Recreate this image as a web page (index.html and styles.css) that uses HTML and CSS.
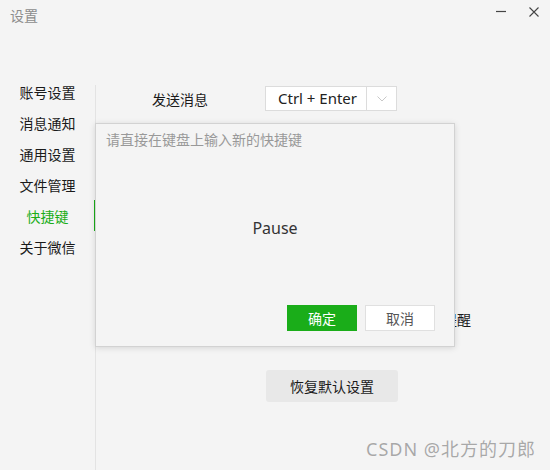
FILE: index.html
```html
<!DOCTYPE html>
<html lang="zh-CN">
<head>
    <meta charset="UTF-8">
    <meta name="viewport" content="width=device-width, initial-scale=1.0">
    <title>设置</title>
    <link rel="stylesheet" href="styles.css">
</head>
<body>
    <div class="window">
        <header class="titlebar">
            <span class="title">设置</span>
            <div class="win-controls">
                <button class="win-btn" aria-label="最小化">
                    <svg width="10" height="10" viewBox="0 0 10 10"><path d="M0 4.5h10" stroke="#444" stroke-width="1.2"/></svg>
                </button>
                <button class="win-btn" aria-label="关闭">
                    <svg width="10" height="10" viewBox="0 0 10 10"><path d="M0.5 0.5l9 9M9.5 0.5l-9 9" stroke="#444" stroke-width="1.1"/></svg>
                </button>
            </div>
        </header>

        <div class="settings">
            <ul class="side-menu">
                <li>账号设置</li>
                <li>消息通知</li>
                <li>通用设置</li>
                <li>文件管理</li>
                <li class="active">快捷键</li>
                <li>关于微信</li>
            </ul>

            <div class="panel">
                <div class="shortcut-row">
                    <span class="shortcut-label">发送消息</span>
                    <div class="select-box">
                        <span class="select-value">Ctrl + Enter</span>
                        <span class="select-arrow">
                            <svg width="10" height="6" viewBox="0 0 10 6"><path d="M0.5 0.5l4.5 4.5 4.5-4.5" fill="none" stroke="#c8c8c8" stroke-width="1"/></svg>
                        </span>
                    </div>
                </div>
                <div class="hidden-row">新消息提醒</div>
                <button class="reset-button">恢复默认设置</button>
            </div>
        </div>

        <div class="key-dialog">
            <div class="key-hint">请直接在键盘上输入新的快捷键</div>
            <div class="key-value">Pause</div>
            <div class="dialog-actions">
                <button class="btn-ok">确定</button>
                <button class="btn-cancel">取消</button>
            </div>
        </div>

        <div class="watermark">CSDN @北方的刀郎</div>
    </div>
</body>
</html>
```

FILE: styles.css
```css
html, body {
    margin: 0;
    padding: 0;
    height: 100%;
    overflow: hidden;
}
body {
    font-family: "Noto Sans", "Noto Sans CJK SC", sans-serif;
    font-size: 14px;
    background-color: #f4f4f4;
    color: #1a1a1a;
}
button {
    font-family: inherit;
}

.window {
    position: relative;
    height: 470px;
}

.titlebar {
    height: 32px;
    display: flex;
    justify-content: space-between;
    align-items: center;
    padding-left: 10px;
}
.title {
    color: #8c8c8c;
    font-size: 14px;
    line-height: 16px;
}
.win-controls {
    display: flex;
    align-items: center;
    margin-top: -8px;
}
.win-btn {
    width: 33px;
    height: 20px;
    padding: 0;
    border: none;
    background: none;
    display: flex;
    align-items: center;
    justify-content: center;
}

/* 左侧菜单 + 右侧内容 */
.settings {
    display: flex;
    align-items: flex-start;
    padding-top: 45px;
}
.side-menu {
    list-style: none;
    margin: 0;
    padding: 0;
    width: 95px;
    flex-shrink: 0;
}
.side-menu li {
    position: relative;
    height: 31px;
    line-height: 31px;
    text-align: center;
    font-size: 14px;
    color: #1a1a1a;
}
.side-menu li.active {
    color: #1aad19;
}
.side-menu li.active::after {
    content: "";
    position: absolute;
    right: -1px;
    top: -1px;
    width: 2px;
    height: 31px;
    background-color: #1aad19;
}

.panel {
    flex-grow: 1;
    margin-top: 8px;
    height: 385px;
    border-left: 1px solid #e3e3e3;
    display: flex;
    flex-direction: column;
    padding-top: 1px;
}

.shortcut-row {
    display: flex;
    align-items: center;
    padding-left: 56px;
}
.shortcut-label {
    width: 113px;
    font-size: 14px;
}
.select-box {
    display: flex;
    height: 23px;
    width: 130px;
    background-color: #fff;
    border: 1px solid #dcdcdc;
}
.select-value {
    width: 101px;
    border-right: 1px solid #dcdcdc;
    text-align: center;
    font-size: 15px;
    line-height: 23px;
    color: #222;
    padding-left: 3px;
    box-sizing: border-box;
}
.select-arrow {
    flex-grow: 1;
    display: flex;
    align-items: center;
    justify-content: center;
}

.hidden-row {
    margin-top: 201px;
    padding-left: 305px;
    line-height: 16px;
    font-size: 14px;
}

.reset-button {
    margin-top: 42px;
    margin-left: 170px;
    width: 132px;
    height: 32px;
    border: none;
    border-radius: 3px;
    background-color: #e8e8e8;
    font-size: 14px;
    color: #1a1a1a;
}

/* 快捷键输入弹窗 */
.key-dialog {
    position: absolute;
    left: 95px;
    top: 123px;
    width: 358px;
    height: 222px;
    border: 1px solid #d2d2d2;
    background-color: #f4f4f4;
    box-shadow: 0 1px 6px rgba(0,0,0,0.13);
    display: flex;
    flex-direction: column;
}
.key-hint {
    padding: 8px 10px 0;
    line-height: 16px;
    color: #999;
    font-size: 14px;
}
.key-value {
    flex-grow: 1;
    display: flex;
    align-items: center;
    justify-content: center;
    padding-top: 3px;
    font-size: 16px;
    color: #333;
}
.dialog-actions {
    display: flex;
    justify-content: flex-end;
    gap: 8px;
    padding: 0 19px 15px;
}
.dialog-actions button {
    width: 70px;
    height: 26px;
    font-size: 14px;
    padding: 0;
}
.btn-ok {
    background-color: #1aad19;
    color: #fff;
    border: none;
}
.btn-cancel {
    background-color: #fff;
    color: #555;
    border: 1px solid #e0e0e0;
}

.watermark {
    position: absolute;
    right: 14px;
    bottom: 9px;
    font-size: 18px;
    letter-spacing: 1px;
    color: #a8a8a8;
    text-shadow: 0 0 1px #fff;
}
```
